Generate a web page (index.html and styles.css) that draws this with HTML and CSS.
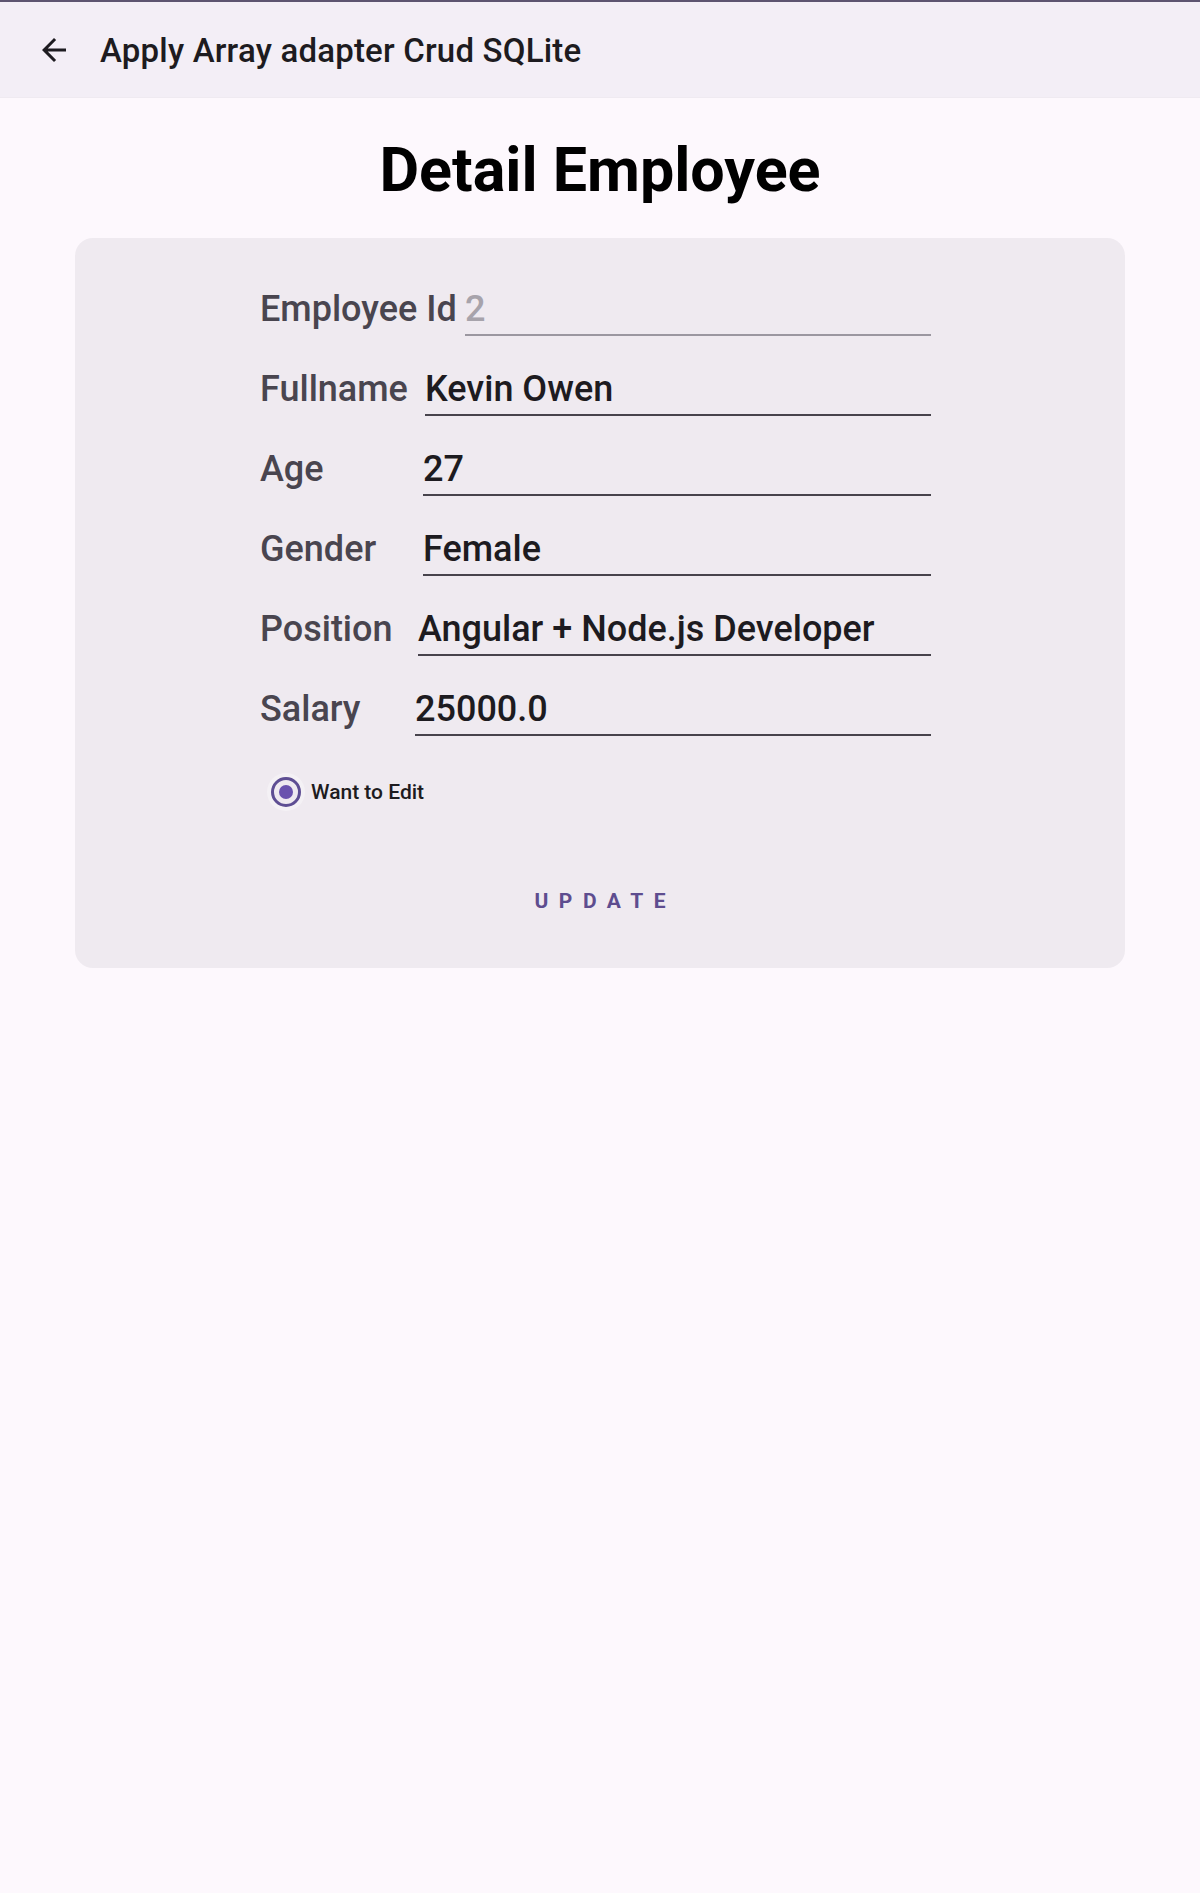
FILE: index.html
```html
<!DOCTYPE html>
<html lang="en">
<head>
<meta charset="utf-8">
<title>Detail Employee</title>
<link rel="stylesheet" href="styles.css">
</head>
<body>
  <header class="appbar">
    <button class="back" aria-label="Back">
      <svg viewBox="0 0 24 24" width="36" height="36"><path d="M20 11H7.83l5.59-5.59L12 4l-8 8 8 8 1.41-1.41L7.83 13H20v-2z" fill="#1d1b20"/></svg>
    </button>
    <h1 class="appbar-title">Apply Array adapter Crud SQLite</h1>
  </header>

  <main class="content">
    <h2 class="page-title">Detail Employee</h2>

    <section class="card">
      <div class="form">
        <div class="fields">
          <div class="row">
            <span class="label w-id">Employee Id</span>
            <span class="field field-disabled"><span class="value muted">2</span></span>
          </div>
          <div class="row">
            <span class="label w-name">Fullname</span>
            <span class="field"><span class="value">Kevin Owen</span></span>
          </div>
          <div class="row">
            <span class="label w-age">Age</span>
            <span class="field"><span class="value">27</span></span>
          </div>
          <div class="row">
            <span class="label w-gender">Gender</span>
            <span class="field"><span class="value">Female</span></span>
          </div>
          <div class="row">
            <span class="label w-pos">Position</span>
            <span class="field"><span class="value">Angular + Node.js Developer</span></span>
          </div>
          <div class="row">
            <span class="label w-sal">Salary</span>
            <span class="field"><span class="value">25000.0</span></span>
          </div>
        </div>

        <label class="radio-row">
          <span class="radio"><span class="radio-dot"></span></span>
          <span class="radio-text">Want to Edit</span>
        </label>
      </div>

      <div class="actions">
        <button class="text-button">UPDATE</button>
      </div>
    </section>
  </main>
</body>
</html>
```

FILE: styles.css
```css
* { box-sizing: border-box; }

html, body {
  margin: 0;
  padding: 0;
}

body {
  background: #fdf8fd;
  font-family: Roboto, "Noto Sans", "Liberation Sans", sans-serif;
  color: #1d1b20;
  min-height: 1893px;
}

.appbar {
  height: 98px;
  border-top: 2px solid #5d5470;
  background: #f3eef6;
  display: flex;
  align-items: center;
  border-bottom: 1px solid #efeaf1;
}

.back {
  width: 36px;
  height: 36px;
  margin-left: 36px;
  padding: 0;
  border: 0;
  background: none;
  display: flex;
  align-items: center;
  justify-content: center;
}

.back svg { display: block; }

.appbar-title {
  margin: 2px 0 0 28px;
  font-size: 33px;
  line-height: 40px;
  font-weight: 500;
  letter-spacing: 0.2px;
  color: #1d1b20;
}

.content {
  display: flex;
  flex-direction: column;
  align-items: center;
}

.page-title {
  margin: 37px 0 0 0;
  font-size: 61px;
  line-height: 70px;
  font-weight: 700;
  color: #000;
}

.card {
  width: 1050px;
  margin-top: 33px;
  background: #efeaf0;
  border-radius: 18px;
  padding: 51px 0 37px 0;
  display: flex;
  flex-direction: column;
}

.form {
  width: 671px;
  margin-left: 185px;
}

.fields {
  display: flex;
  flex-direction: column;
  gap: 33px;
}

.row {
  display: flex;
  align-items: flex-start;
  font-size: 36px;
  line-height: 40px;
  font-weight: 500;
}

.label {
  color: #49454f;
  flex: none;
  white-space: nowrap;
}

.w-id { width: 205px; }
.w-name { width: 165px; }
.w-age { width: 163px; }
.w-gender { width: 163px; }
.w-pos { width: 158px; }
.w-sal { width: 155px; }

.field {
  flex: 1;
  padding-bottom: 5px;
  border-bottom: 2px solid #47434c;
}

.field-disabled {
  border-bottom: 2px solid #9b97a0;
}

.value {
  color: #1d1b20;
  white-space: nowrap;
}

.value.muted {
  color: #a7a3ab;
}

.radio-row {
  display: flex;
  align-items: center;
  height: 48px;
  margin-top: 32px;
  padding-left: 11px;
}

.radio {
  width: 30px;
  height: 30px;
  border-radius: 50%;
  border: 3px solid #5e4e93;
  display: flex;
  align-items: center;
  justify-content: center;
  box-shadow: 0 0 0 4px rgba(255, 255, 255, 0.35);
}

.radio-dot {
  width: 14px;
  height: 14px;
  border-radius: 50%;
  background: #6a52ae;
}

.radio-text {
  margin-left: 10px;
  font-size: 21px;
  line-height: 48px;
  font-weight: 500;
  color: #1d1b20;
}

.actions {
  display: flex;
  justify-content: center;
  margin-top: 55px;
}

.text-button {
  height: 60px;
  padding: 0 0 0 10.5px;
  border: 0;
  background: none;
  font-family: Roboto, "Noto Sans", "Liberation Sans", sans-serif;
  font-size: 21px;
  line-height: 60px;
  font-weight: 700;
  letter-spacing: 10.5px;
  color: #5e4d8f;
}
```
